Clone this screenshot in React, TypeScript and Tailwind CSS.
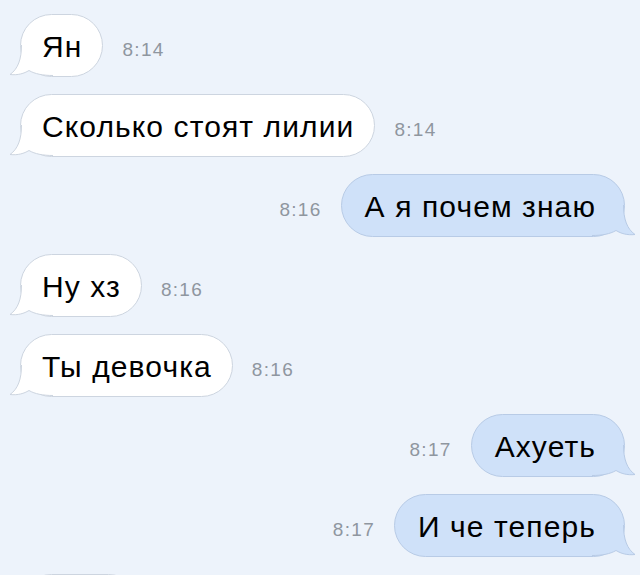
import React from 'react';

interface Message {
    id: number;
    text: string;
    time: string;
    out: boolean;
}

const messages: Message[] = [
    { id: 1, text: 'Ян', time: '8:14', out: false },
    { id: 2, text: 'Сколько стоят лилии', time: '8:14', out: false },
    { id: 3, text: 'А я почем знаю', time: '8:16', out: true },
    { id: 4, text: 'Ну хз', time: '8:16', out: false },
    { id: 5, text: 'Ты девочка', time: '8:16', out: false },
    { id: 6, text: 'Ахуеть', time: '8:17', out: true },
    { id: 7, text: 'И че теперь', time: '8:17', out: true },
];

// bubble tail, drawn for the left side and mirrored for outgoing
function Tail({ out }: { out: boolean }) {
    const fill = out ? '#cfe1f9' : '#ffffff';
    const stroke = out ? '#b8cbe6' : '#cdd5e0';
    return (
        <svg
            width="50"
            height="32"
            viewBox="0 0 50 32"
            className={`absolute bottom-[-1px] ${out ? 'right-[-12px] -scale-x-100' : 'left-[-12px]'}`}
        >
            <path
                d="M12.5 0 C12.5 14 9 24 1 29.5 C9 30.4 15 28.5 20 25.5 C26 29 34 30.5 44 30.5 L44 0 Z"
                fill={fill}
            />
            <path
                d="M12.5 0 C12.5 14 9 24 1 29.5 C9 30.4 15 28.5 20 25.5 C26 29 34 30.5 44 30.5"
                fill="none"
                stroke={stroke}
                strokeWidth="1"
            />
        </svg>
    );
}

function Bubble({ message }: { message: Message }) {
    return (
        <div
            className={`relative h-[63px] flex items-center rounded-[32px] border ${
                message.out
                    ? 'bg-[#cfe1f9] border-[#b8cbe6] pl-[23px] pr-[28px]'
                    : 'bg-white border-[#cdd5e0] pl-[21px] pr-[20px]'
            }`}
        >
            <Tail out={message.out} />
            <span className="relative text-[30px] leading-none text-black tracking-[1.1px] pt-[2px]">{message.text}</span>
        </div>
    );
}

export default function App() {
    return (
        <div
            className="w-[640px] h-[575px] overflow-hidden bg-[#edf3fb] pt-[14px] pl-[20px] pr-[15px] flex flex-col gap-[17px]"
            style={{ fontFamily: '"Liberation Sans", Arial, sans-serif' }}
        >
            {messages.map((m) => (
                <div key={m.id} className={`flex items-center gap-[19px] ${m.out ? 'justify-end' : 'justify-start'}`}>
                    {m.out && <span className="text-[19px] tracking-[1.3px] text-[#8f969f] mt-[10px]">{m.time}</span>}
                    <Bubble message={m} />
                    {!m.out && <span className="text-[19px] tracking-[1.3px] text-[#8f969f] mt-[10px]">{m.time}</span>}
                </div>
            ))}
            <div className="flex">
                <div className="relative h-[63px] w-[120px] rounded-[32px] border bg-white border-[#cdd5e0]" />
            </div>
        </div>
    );
}
